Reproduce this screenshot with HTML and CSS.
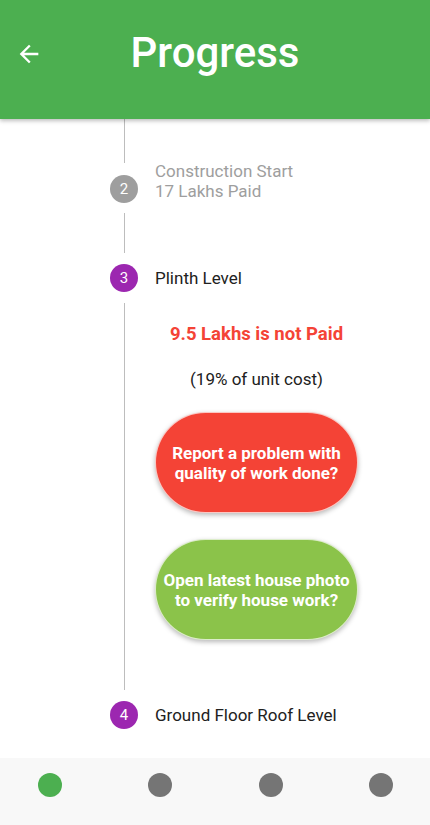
FILE: index.html
```html
<!DOCTYPE html>
<html>
<head>
<meta charset="utf-8">
<link rel="stylesheet" href="styles.css">
</head>
<body>
<div class="app">
  <header class="appbar">
    <svg class="back" viewBox="0 0 24 24" width="28" height="28"><path d="M20 11H7.83l5.59-5.59L12 4l-8 8 8 8 1.41-1.41L7.83 13H20v-2z" fill="#fff"/></svg>
    <h1 class="title">Progress</h1>
  </header>
  <main class="body">
    <div class="line line0"></div>
    <div class="step-head">
      <span class="dot grey">2</span>
      <div class="label grey-text two-line">Construction Start<br>17 Lakhs Paid</div>
    </div>
    <div class="line line1"></div>
    <div class="step-head">
      <span class="dot purple">3</span>
      <div class="label">Plinth Level</div>
    </div>
    <div class="line line2">
      <div class="content">
        <div class="unpaid">9.5 Lakhs is not Paid</div>
        <div class="pct">(19% of unit cost)</div>
        <button class="pill red">Report a problem with<br>quality of work done?</button>
        <button class="pill green">Open latest house photo<br>to verify house work?</button>
      </div>
    </div>
    <div class="step-head">
      <span class="dot purple">4</span>
      <div class="label">Ground Floor Roof Level</div>
    </div>
  </main>
  <nav class="bottom">
    <span class="navdot active"></span>
    <span class="navdot"></span>
    <span class="navdot"></span>
    <span class="navdot"></span>
  </nav>
</div>
</body>
</html>
```
FILE: styles.css
```css
* { box-sizing: border-box; }
html, body { margin: 0; padding: 0; }
body {
  width: 430px;
  height: 825px;
  overflow: hidden;
  background: #fff;
  font-family: Roboto, "Noto Sans", sans-serif;
}
.app {
  display: flex;
  flex-direction: column;
  height: 825px;
}
.appbar {
  position: relative;
  z-index: 2;
  height: 119px;
  flex: none;
  background: #4caf50;
  display: flex;
  align-items: flex-start;
  justify-content: center;
  padding-top: 28px;
  box-shadow: 0 2px 4px rgba(0,0,0,0.25);
}
.back {
  position: absolute;
  left: 15px;
  top: 40px;
}
.title {
  margin: 0;
  color: #fff;
  font-size: 42px;
  font-weight: 500;
  line-height: 50px;
}
.body {
  flex: 1;
  overflow: hidden;
  background: #fff;
}
.line {
  margin-left: 124px;
  border-left: 1px solid #bdbdbd;
}
.line0 { height: 44px; margin-bottom: 12px; }
.line1 { height: 40px; margin-top: 10px; margin-bottom: 11px; }
.line2 { margin-top: 11px; margin-bottom: 11px; }
.step-head {
  height: 28px;
  display: flex;
  align-items: center;
  padding-left: 110px;
  gap: 17px;
}
.dot {
  width: 28px;
  height: 28px;
  border-radius: 50%;
  flex: none;
  display: flex;
  align-items: center;
  justify-content: center;
  color: #fff;
  font-size: 15px;
}
.dot.grey { background: #9e9e9e; }
.dot.purple { background: #9c27b0; }
.label {
  font-size: 17px;
  line-height: 20px;
  color: #212121;
  white-space: nowrap;
}
.two-line {
  align-self: flex-start;
  margin-top: -14px;
}
.grey-text { color: #9e9e9e; }
.content {
  margin-left: 30px;
  width: 203px;
  display: flex;
  flex-direction: column;
  align-items: center;
  padding-top: 20px;
  padding-bottom: 50px;
}
.unpaid {
  font-size: 18.5px;
  line-height: 22px;
  font-weight: 700;
  color: #f44336;
  white-space: nowrap;
}
.pct {
  margin-top: 23.5px;
  font-size: 17px;
  line-height: 20px;
  color: #212121;
  white-space: nowrap;
}
.pill {
  width: 203px;
  height: 101px;
  border-radius: 51px;
  border: 1px solid rgba(255,255,255,0.7);
  color: #fff;
  font-family: Roboto, "Noto Sans", sans-serif;
  font-size: 17px;
  line-height: 20px;
  font-weight: 700;
  text-align: center;
  padding: 0;
  white-space: nowrap;
  box-shadow: 0 2px 5px rgba(0,0,0,0.28);
}
.pill.red { background: #f44336; margin-top: 23.5px; }
.pill.green { background: #8bc34a; margin-top: 26px; }
.bottom {
  height: 67px;
  flex: none;
  background: #f8f8f8;
  display: flex;
  justify-content: space-between;
  align-items: flex-start;
  padding: 15px 37px 0 38px;
}
.navdot {
  width: 24px;
  height: 24px;
  border-radius: 50%;
  background: #757575;
}
.navdot.active { background: #4caf50; }
```
